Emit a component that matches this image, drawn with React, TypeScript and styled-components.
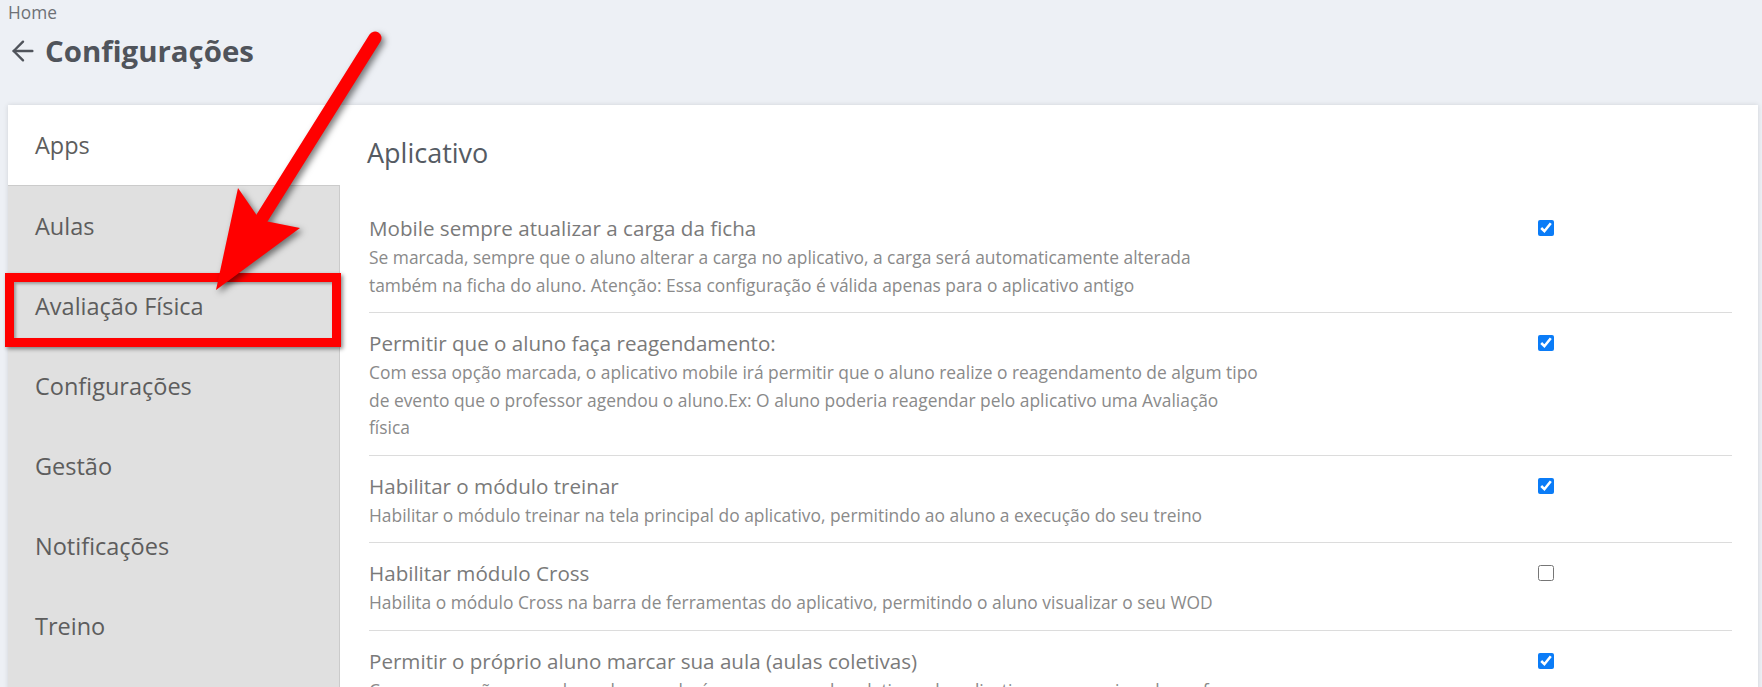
import React from "react";
import styled, { createGlobalStyle } from "styled-components";
import { ArrowLeft } from "lucide-react";

const GlobalStyle = createGlobalStyle`
  html, body {
    margin: 0;
    padding: 0;
    background: #edf0f5;
  }
  body {
    font-family: "Open Sans", "Noto Sans", sans-serif;
    overflow: hidden;
  }
`;

type Setting = {
  title: string;
  lines: string[];
  checked: boolean;
};

const settings: Setting[] = [
  {
    title: "Mobile sempre atualizar a carga da ficha",
    lines: [
      "Se marcada, sempre que o aluno alterar a carga no aplicativo, a carga será automaticamente alterada",
      "também na ficha do aluno. Atenção: Essa configuração é válida apenas para o aplicativo antigo",
    ],
    checked: true,
  },
  {
    title: "Permitir que o aluno faça reagendamento:",
    lines: [
      "Com essa opção marcada, o aplicativo mobile irá permitir que o aluno realize o reagendamento de algum tipo",
      "de evento que o professor agendou o aluno.Ex: O aluno poderia reagendar pelo aplicativo uma Avaliação",
      "física",
    ],
    checked: true,
  },
  {
    title: "Habilitar o módulo treinar",
    lines: [
      "Habilitar o módulo treinar na tela principal do aplicativo, permitindo ao aluno a execução do seu treino",
    ],
    checked: true,
  },
  {
    title: "Habilitar módulo Cross",
    lines: [
      "Habilita o módulo Cross na barra de ferramentas do aplicativo, permitindo o aluno visualizar o seu WOD",
    ],
    checked: false,
  },
  {
    title: "Permitir o próprio aluno marcar sua aula (aulas coletivas)",
    lines: [
      "Com essa opção marcada, o aluno poderá marcar sua aula coletiva pelo aplicativo, sem precisar do professor",
    ],
    checked: true,
  },
];

const menu = [
  "Apps",
  "Aulas",
  "Avaliação Física",
  "Configurações",
  "Gestão",
  "Notificações",
  "Treino",
];

const Page = styled.div`
  position: relative;
  height: 687px;
  overflow: hidden;
  padding: 0 4px 0 8px;
`;

const Breadcrumb = styled.div`
  padding-top: 1px;
  font-size: 17.3px;
  line-height: 24px;
  color: #6d7076;
`;

const TitleRow = styled.div`
  display: flex;
  align-items: center;
  gap: 6px;
  margin-top: 8px;
  color: #50545b;

  svg {
    margin-left: -1px;
  }
`;

const Title = styled.h1`
  margin: 0;
  font-size: 29.4px;
  line-height: 36px;
  font-weight: 700;
`;

const Card = styled.div`
  display: grid;
  grid-template-columns: 332px 1fr;
  margin-top: 36px;
  min-height: 600px;
  background: #fff;
  box-shadow: 0 0 5px rgba(0, 0, 0, 0.12);
`;

const Sidebar = styled.nav`
  display: flex;
  flex-direction: column;
  background: #e0e0e0;
  border-right: 1px solid #cbcbcb;
`;

const NavItem = styled.div<{ $active?: boolean }>`
  height: 80px;
  display: flex;
  align-items: center;
  padding-left: 27px;
  font-size: 23.5px;
  color: #5d5d5d;
  background: ${(p) => (p.$active ? "#fff" : "transparent")};
  margin-right: ${(p) => (p.$active ? "-1px" : "0")};
  border-bottom: ${(p) => (p.$active ? "1px solid #cbcbcb" : "none")};
`;

const Content = styled.section`
  padding: 32px 26px 0 29px;
`;

const SectionTitle = styled.h2`
  margin: 0 0 29px -2px;
  font-size: 27px;
  line-height: 32px;
  font-weight: 400;
  color: #555b63;
`;

const Row = styled.div`
  display: grid;
  grid-template-columns: 1169px auto;
  padding: 16px 0 13px;
  border-bottom: 1px solid #dcdcdc;
`;

const RowTitle = styled.div`
  font-size: 20.6px;
  line-height: 28px;
  color: #7a7a7a;
`;

const RowDesc = styled.div`
  margin-top: 2px;
  font-size: 17.4px;
  line-height: 27.5px;
  color: #8a8a8a;

  span {
    display: block;
    white-space: nowrap;
  }
`;

const Check = styled.input`
  width: 16px;
  height: 16px;
  margin: 6px 0 0;
  accent-color: #0b7cf7;
`;

const RedBox = styled.div`
  position: absolute;
  left: 5px;
  top: 273px;
  width: 336px;
  height: 74px;
  box-sizing: border-box;
  border: 9px solid #ff0000;
  box-shadow: 2px 2px 4px rgba(0, 0, 0, 0.45),
    inset 2px 2px 3px rgba(0, 0, 0, 0.3);
  pointer-events: none;
`;

const Overlay = styled.svg`
  position: absolute;
  left: 0;
  top: 0;
  pointer-events: none;
  filter: drop-shadow(3px 3px 3px rgba(0, 0, 0, 0.5));
`;

const App = () => {
  return (
    <Page>
      <GlobalStyle />
      <Breadcrumb>Home</Breadcrumb>
      <TitleRow>
        <ArrowLeft size={32} strokeWidth={1.8} />
        <Title>Configurações</Title>
      </TitleRow>
      <Card>
        <Sidebar>
          {menu.map((m, i) => (
            <NavItem key={m} $active={i === 0}>
              {m}
            </NavItem>
          ))}
        </Sidebar>
        <Content>
          <SectionTitle>Aplicativo</SectionTitle>
          {settings.map((s) => (
            <Row key={s.title}>
              <div>
                <RowTitle>{s.title}</RowTitle>
                <RowDesc>
                  {s.lines.map((l) => (
                    <span key={l}>{l}</span>
                  ))}
                </RowDesc>
              </div>
              <div>
                <Check type="checkbox" defaultChecked={s.checked} />
              </div>
            </Row>
          ))}
        </Content>
      </Card>
      <RedBox />
      <Overlay width="1762" height="687" viewBox="0 0 1762 687">
        <line
          x1="375"
          y1="38"
          x2="262"
          y2="218"
          stroke="#ff0000"
          strokeWidth="13"
          strokeLinecap="round"
        />
        <polygon points="216,290 238,188 260,220 300,228" fill="#ff0000" />
      </Overlay>
    </Page>
  );
};

export default App;
